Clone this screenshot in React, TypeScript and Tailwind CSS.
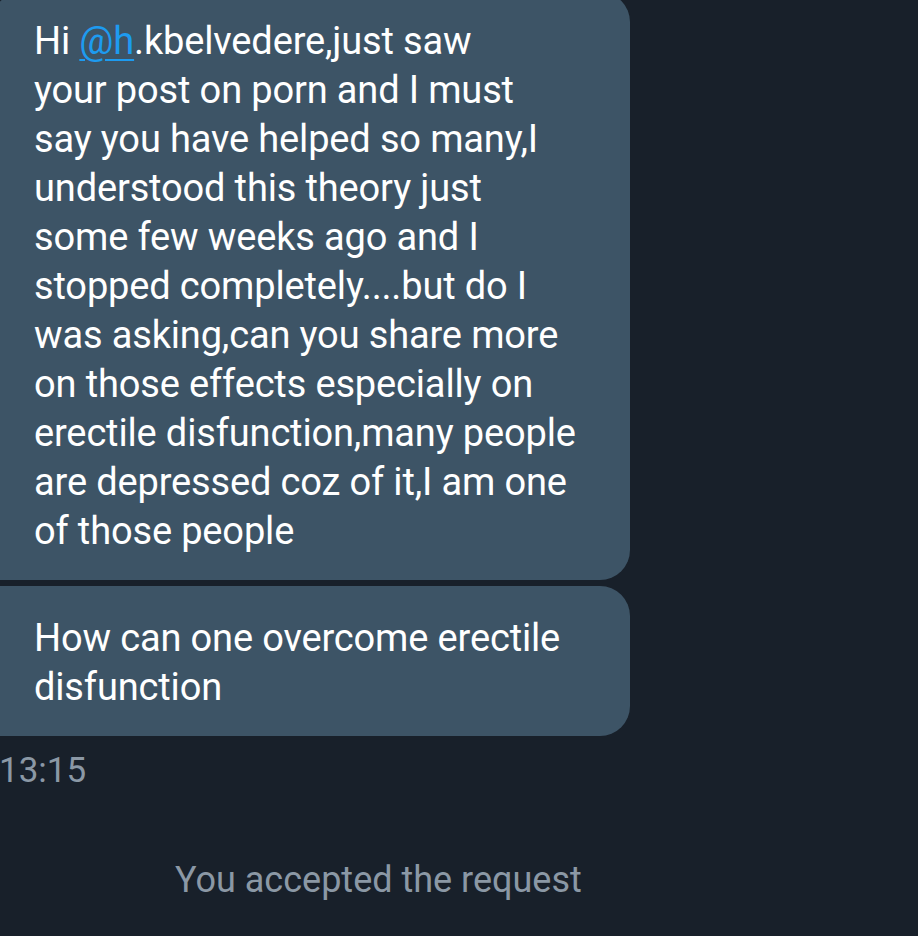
const lines1 = [
  "your post on porn and I must",
  "say you have helped so many,I",
  "understood this theory just",
  "some few weeks ago and I",
  "stopped completely....but do I",
  "was asking,can you share more",
  "on those effects especially on",
  "erectile disfunction,many people",
  "are depressed coz of it,I am one",
  "of those people",
]

const App = () => {
  return (
    <div
      className="w-[918px] h-[936px] overflow-hidden bg-[#18202a] text-white"
      style={{ fontFamily: "Roboto, 'Noto Sans', sans-serif" }}
    >
      <div className="flex flex-col gap-[6px]">
        <div className="w-[638px] -ml-[8px] -mt-[8px] bg-[#3d5466] rounded-tl-[30px] rounded-tr-[30px] rounded-br-[30px] rounded-bl-[4px] pl-[42px] pt-[25px] pb-[24px] text-[38px] leading-[49px] tracking-[-0.15px]">
          <div>
            Hi <span className="text-[#1d9bf0] underline decoration-[2px] underline-offset-[5px]">@h</span>.kbelvedere,just saw
          </div>
          {lines1.map((l) => (
            <div key={l}>{l}</div>
          ))}
        </div>
        <div className="w-[638px] -ml-[8px] bg-[#3d5466] rounded-tl-[4px] rounded-tr-[30px] rounded-br-[30px] rounded-bl-[4px] pl-[42px] pt-[28px] pb-[24px] text-[38px] leading-[49px] tracking-[-0.15px]">
          <div>How can one overcome erectile</div>
          <div>disfunction</div>
        </div>
      </div>
      <div className="mt-[10px] -ml-[1px] text-[35px] leading-[49px] text-[#8b98a5]">13:15</div>
      <div className="mt-[61px] pl-[175px] text-[36px] leading-[49px] text-[#8b98a5]">You accepted the request</div>
    </div>
  )
}

export default App
